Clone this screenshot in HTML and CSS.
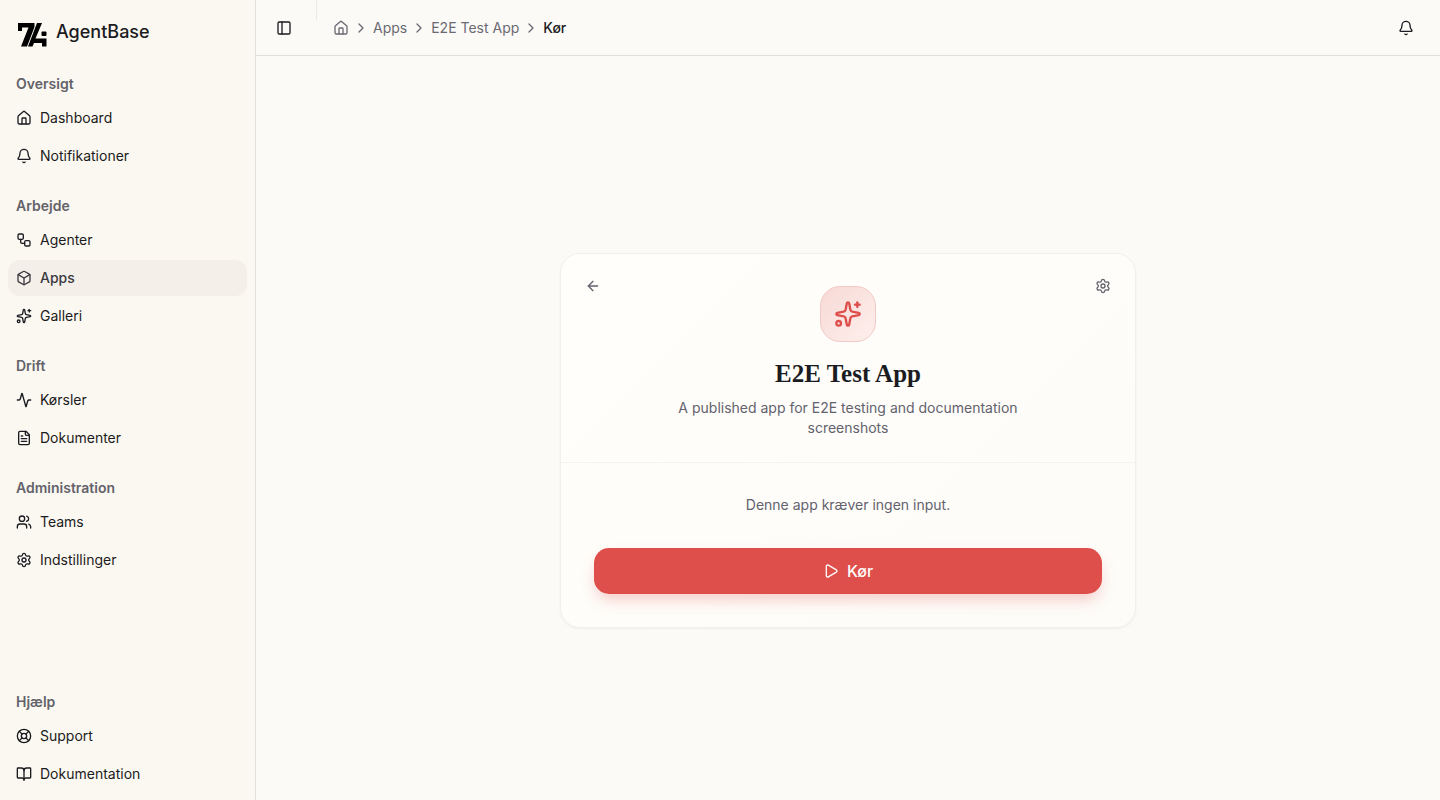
FILE: index.html
```html
<!DOCTYPE html>
<html lang="da">
<head>
  <meta charset="UTF-8">
  <meta name="viewport" content="width=device-width, initial-scale=1.0">
  <title>E2E Test App - AgentBase</title>
  <link rel="stylesheet" href="styles.css">
</head>
<body>
  <!-- Shared icons -->
  <svg class="icon-defs" aria-hidden="true">
    <symbol id="house" viewBox="0 0 24 24">
      <path d="M15 21v-8a1 1 0 0 0-1-1h-4a1 1 0 0 0-1 1v8"/>
      <path d="M3 10a2 2 0 0 1 .709-1.528l7-5.999a2 2 0 0 1 2.582 0l7 5.999A2 2 0 0 1 21 10v9a2 2 0 0 1-2 2H5a2 2 0 0 1-2-2z"/>
    </symbol>
    <symbol id="bell" viewBox="0 0 24 24">
      <path d="M10.268 21a2 2 0 0 0 3.464 0"/>
      <path d="M3.262 15.326A1 1 0 0 0 4 17h16a1 1 0 0 0 .74-1.673C19.41 13.956 18 12.499 18 8A6 6 0 0 0 6 8c0 4.499-1.411 5.956-2.738 7.326"/>
    </symbol>
    <symbol id="workflow" viewBox="0 0 24 24">
      <rect width="8" height="8" x="3" y="3" rx="2"/>
      <path d="M7 11v4a2 2 0 0 0 2 2h4"/>
      <rect width="8" height="8" x="13" y="13" rx="2"/>
    </symbol>
    <symbol id="box" viewBox="0 0 24 24">
      <path d="M21 8a2 2 0 0 0-1-1.73l-7-4a2 2 0 0 0-2 0l-7 4A2 2 0 0 0 3 8v8a2 2 0 0 0 1 1.73l7 4a2 2 0 0 0 2 0l7-4A2 2 0 0 0 21 16Z"/>
      <path d="m3.3 7 8.7 5 8.7-5"/>
      <path d="M12 22V12"/>
    </symbol>
    <symbol id="sparkles" viewBox="0 0 24 24">
      <path d="M11.017 2.814a1 1 0 0 1 1.966 0l1.051 5.558a2 2 0 0 0 1.594 1.594l5.558 1.051a1 1 0 0 1 0 1.966l-5.558 1.051a2 2 0 0 0-1.594 1.594l-1.051 5.558a1 1 0 0 1-1.966 0l-1.051-5.558a2 2 0 0 0-1.594-1.594l-5.558-1.051a1 1 0 0 1 0-1.966l5.558-1.051a2 2 0 0 0 1.594-1.594z"/>
      <path d="M20 2v4"/>
      <path d="M22 4h-4"/>
      <circle cx="4" cy="20" r="2"/>
    </symbol>
    <symbol id="activity" viewBox="0 0 24 24">
      <path d="M22 12h-2.48a2 2 0 0 0-1.93 1.46l-2.35 8.36a.25.25 0 0 1-.48 0L9.24 2.18a.25.25 0 0 0-.48 0l-2.35 8.36A2 2 0 0 1 4.49 12H2"/>
    </symbol>
    <symbol id="file-text" viewBox="0 0 24 24">
      <path d="M15 2H6a2 2 0 0 0-2 2v16a2 2 0 0 0 2 2h12a2 2 0 0 0 2-2V7Z"/>
      <path d="M14 2v4a2 2 0 0 0 2 2h4"/>
      <path d="M10 9H8"/>
      <path d="M16 13H8"/>
      <path d="M16 17H8"/>
    </symbol>
    <symbol id="users" viewBox="0 0 24 24">
      <path d="M16 21v-2a4 4 0 0 0-4-4H6a4 4 0 0 0-4 4v2"/>
      <circle cx="9" cy="7" r="4"/>
      <path d="M22 21v-2a4 4 0 0 0-3-3.87"/>
      <path d="M16 3.13a4 4 0 0 1 0 7.75"/>
    </symbol>
    <symbol id="settings" viewBox="0 0 24 24">
      <path d="M9.671 4.136a2.34 2.34 0 0 1 4.659 0 2.34 2.34 0 0 0 3.319 1.915 2.34 2.34 0 0 1 2.33 4.033 2.34 2.34 0 0 0 0 3.831 2.34 2.34 0 0 1-2.33 4.033 2.34 2.34 0 0 0-3.319 1.915 2.34 2.34 0 0 1-4.659 0 2.34 2.34 0 0 0-3.32-1.915 2.34 2.34 0 0 1-2.33-4.033 2.34 2.34 0 0 0 0-3.831A2.34 2.34 0 0 1 6.35 6.051a2.34 2.34 0 0 0 3.319-1.915"/>
      <circle cx="12" cy="12" r="3"/>
    </symbol>
    <symbol id="life-buoy" viewBox="0 0 24 24">
      <circle cx="12" cy="12" r="10"/>
      <path d="m4.93 4.93 4.24 4.24"/>
      <path d="m14.83 9.17 4.24-4.24"/>
      <path d="m14.83 14.83 4.24 4.24"/>
      <path d="m9.17 14.83-4.24 4.24"/>
      <circle cx="12" cy="12" r="4"/>
    </symbol>
    <symbol id="book-open" viewBox="0 0 24 24">
      <path d="M12 7v14"/>
      <path d="M3 18a1 1 0 0 1-1-1V4a1 1 0 0 1 1-1h5a4 4 0 0 1 4 4 4 4 0 0 1 4-4h5a1 1 0 0 1 1 1v13a1 1 0 0 1-1 1h-6a3 3 0 0 0-3 3 3 3 0 0 0-3-3z"/>
    </symbol>
    <symbol id="panel-left" viewBox="0 0 24 24">
      <rect width="18" height="18" x="3" y="3" rx="2"/>
      <path d="M9 3v18"/>
    </symbol>
    <symbol id="chevron-right" viewBox="0 0 24 24">
      <path d="m9 18 6-6-6-6"/>
    </symbol>
    <symbol id="arrow-left" viewBox="0 0 24 24">
      <path d="m12 19-7-7 7-7"/>
      <path d="M19 12H5"/>
    </symbol>
    <symbol id="play" viewBox="0 0 24 24">
      <path d="M5 5a2 2 0 0 1 3.008-1.728l11.997 6.998a2 2 0 0 1 .003 3.458l-12 7A2 2 0 0 1 5 19z"/>
    </symbol>
  </svg>

  <div class="layout">
    <aside class="sidebar">
      <a href="#" class="brand">
        <svg class="brand-logo" viewBox="0 0 32 32" aria-hidden="true">
          <path d="M2 7H18.5V11L11 30.5H5L12.500 11.500H6V15H2Z"/>
          <path d="M21 7H26L19.5 22.5H30.5V30.5H26V27H18L16.500 30.5H12Z"/>
          <rect x="25.5" y="15.5" width="5" height="4.5" rx="1"/>
        </svg>
        <span>AgentBase</span>
      </a>

      <nav class="nav">
        <section class="nav-group">
          <h2>Oversigt</h2>
          <ul>
            <li><a href="#"><svg class="icon"><use href="#house"/></svg>Dashboard</a></li>
            <li><a href="#"><svg class="icon"><use href="#bell"/></svg>Notifikationer</a></li>
          </ul>
        </section>
        <section class="nav-group">
          <h2>Arbejde</h2>
          <ul>
            <li><a href="#"><svg class="icon"><use href="#workflow"/></svg>Agenter</a></li>
            <li><a href="#" class="active"><svg class="icon"><use href="#box"/></svg>Apps</a></li>
            <li><a href="#"><svg class="icon"><use href="#sparkles"/></svg>Galleri</a></li>
          </ul>
        </section>
        <section class="nav-group">
          <h2>Drift</h2>
          <ul>
            <li><a href="#"><svg class="icon"><use href="#activity"/></svg>Kørsler</a></li>
            <li><a href="#"><svg class="icon"><use href="#file-text"/></svg>Dokumenter</a></li>
          </ul>
        </section>
        <section class="nav-group">
          <h2>Administration</h2>
          <ul>
            <li><a href="#"><svg class="icon"><use href="#users"/></svg>Teams</a></li>
            <li><a href="#"><svg class="icon"><use href="#settings"/></svg>Indstillinger</a></li>
          </ul>
        </section>
        <section class="nav-group nav-help">
          <h2>Hjælp</h2>
          <ul>
            <li><a href="#"><svg class="icon"><use href="#life-buoy"/></svg>Support</a></li>
            <li><a href="#"><svg class="icon"><use href="#book-open"/></svg>Dokumentation</a></li>
          </ul>
        </section>
      </nav>
    </aside>

    <div class="page">
      <header class="topbar">
        <button type="button" class="icon-button" aria-label="Skjul menu"><svg class="icon"><use href="#panel-left"/></svg></button>
        <span class="separator"></span>
        <nav class="breadcrumb">
          <a href="#" aria-label="Hjem"><svg class="icon"><use href="#house"/></svg></a>
          <svg class="icon"><use href="#chevron-right"/></svg>
          <a href="#">Apps</a>
          <svg class="icon"><use href="#chevron-right"/></svg>
          <a href="#">E2E Test App</a>
          <svg class="icon"><use href="#chevron-right"/></svg>
          <span class="current">Kør</span>
        </nav>
        <button type="button" class="icon-button notifications" aria-label="Notifikationer"><svg class="icon"><use href="#bell"/></svg></button>
      </header>

      <main class="content">
        <div class="card">
          <div class="card-header">
            <a href="#" class="icon-button" aria-label="Tilbage"><svg class="icon"><use href="#arrow-left"/></svg></a>
            <div class="app-info">
              <div class="app-icon"><svg><use href="#sparkles"/></svg></div>
              <h1>E2E Test App</h1>
              <p>A published app for E2E testing and documentation screenshots</p>
            </div>
            <a href="#" class="icon-button" aria-label="Indstillinger"><svg class="icon"><use href="#settings"/></svg></a>
          </div>
          <form class="card-body">
            <p>Denne app kræver ingen input.</p>
            <button type="button" class="run-button"><svg class="icon"><use href="#play"/></svg>Kør</button>
          </form>
        </div>
      </main>
    </div>
  </div>
</body>
</html>
```
FILE: styles.css
```css
* {
  box-sizing: border-box;
}

body {
  margin: 0;
  font-family: Inter, "Open Sans", sans-serif;
  font-size: 14px;
  line-height: 20px;
  color: #1b1b22;
  background-color: #fbfaf7;
}

h1, h2, p, ul {
  margin: 0;
  padding: 0;
}

a {
  color: inherit;
  text-decoration: none;
}

svg {
  flex-shrink: 0;
  fill: none;
  stroke: currentColor;
  stroke-width: 2;
  stroke-linecap: round;
  stroke-linejoin: round;
}

.icon-defs {
  display: none;
}

.icon {
  display: block;
  width: 16px;
  height: 16px;
}

.layout {
  display: flex;
  min-height: 100vh;
}

/* Sidebar */
.sidebar {
  display: flex;
  flex-direction: column;
  width: 256px;
  flex-shrink: 0;
  background-color: #fbf8f1;
  border-right: 1px solid #e1dfda;
}

.brand {
  display: flex;
  gap: 8px;
  padding: 16px 16px 12px;
  font-size: 18px;
  font-weight: 500;
  line-height: 32px;
}

.brand-logo {
  width: 32px;
  height: 32px;
  fill: #000;
  stroke: none;
}

.nav {
  display: flex;
  flex-direction: column;
  flex: 1;
}

.nav-group {
  padding: 8px;
}

.nav-group h2 {
  padding: 0 8px;
  font-size: 14px;
  font-weight: 600;
  line-height: 32px;
  color: #63626a;
}

.nav-group ul {
  display: flex;
  flex-direction: column;
  gap: 2px;
  list-style: none;
}

.nav-group a {
  display: flex;
  align-items: center;
  gap: 8px;
  height: 36px;
  padding: 0 8px;
  border-radius: 12px;
}

.nav-group a:hover,
.nav-group a.active {
  background-color: #f4efe9;
}

.nav-group a.active {
  color: #3a3941;
  font-weight: 500;
}

.nav-help {
  margin-top: auto;
}

/* Top bar */
.page {
  display: flex;
  flex-direction: column;
  flex: 1;
  min-width: 0;
}

.topbar {
  display: flex;
  align-items: center;
  height: 56px;
  padding: 0 20px 0 14px;
  border-bottom: 1px solid #e1dfda;
}

.icon-button {
  display: flex;
  align-items: center;
  justify-content: center;
  width: 28px;
  height: 28px;
  padding: 0;
  border: none;
  border-radius: 8px;
  background: none;
  color: inherit;
  cursor: pointer;
}

.separator {
  align-self: flex-start;
  width: 1px;
  height: 20px;
  margin: 0 16px 0 18px;
  background-color: #eceae5;
}

.breadcrumb {
  display: flex;
  align-items: center;
  gap: 4px;
  color: #6b6a73;
}

.breadcrumb .current {
  color: #1b1b22;
  font-weight: 500;
}

.notifications {
  margin-left: auto;
}

/* App card */
.content {
  display: flex;
  align-items: center;
  justify-content: center;
  flex: 1;
  padding: 48px 24px 24px;
}

.card {
  width: 100%;
  max-width: 576px;
  border: 1px solid #f1f0ec;
  border-radius: 20px;
  background: linear-gradient(135deg, #fffefa, #fdfcf9);
  box-shadow: 0 1px 2px rgba(27, 27, 34, 0.05);
}

.card-header {
  display: flex;
  justify-content: space-between;
  padding: 32px 18px 24px;
  border-bottom: 1px solid #f4f3ee;
}

.card-header .icon-button {
  margin-top: -14px;
  color: #63626d;
}

.app-info {
  display: flex;
  flex-direction: column;
  align-items: center;
  max-width: 384px;
  text-align: center;
}

.app-icon {
  display: flex;
  align-items: center;
  justify-content: center;
  width: 56px;
  height: 56px;
  margin-bottom: 16px;
  border: 1px solid #f3c9c5;
  border-radius: 20px;
  background: linear-gradient(135deg, #f8d9d5, #fdf0ed);
  color: #de4e4b;
}

.app-icon svg {
  width: 28px;
  height: 28px;
}

.app-info h1 {
  margin-bottom: 8px;
  font-family: "Liberation Serif", serif;
  font-size: 25px;
  font-weight: 700;
  line-height: 32px;
}

.app-info p,
.card-body p {
  color: #63626d;
}

.card-body {
  display: flex;
  flex-direction: column;
  gap: 32px;
  padding: 32px;
  text-align: center;
}

.run-button {
  display: flex;
  align-items: center;
  justify-content: center;
  gap: 8px;
  height: 48px;
  border: 1px solid transparent;
  border-radius: 16px;
  background-color: #de4e4b;
  background-clip: padding-box;
  box-shadow: 0 8px 16px -4px rgba(222, 78, 75, 0.3);
  color: #fffdfa;
  font: inherit;
  font-size: 16px;
  font-weight: 500;
  cursor: pointer;
}

.run-button:hover {
  background-color: #cc4340;
}
```
